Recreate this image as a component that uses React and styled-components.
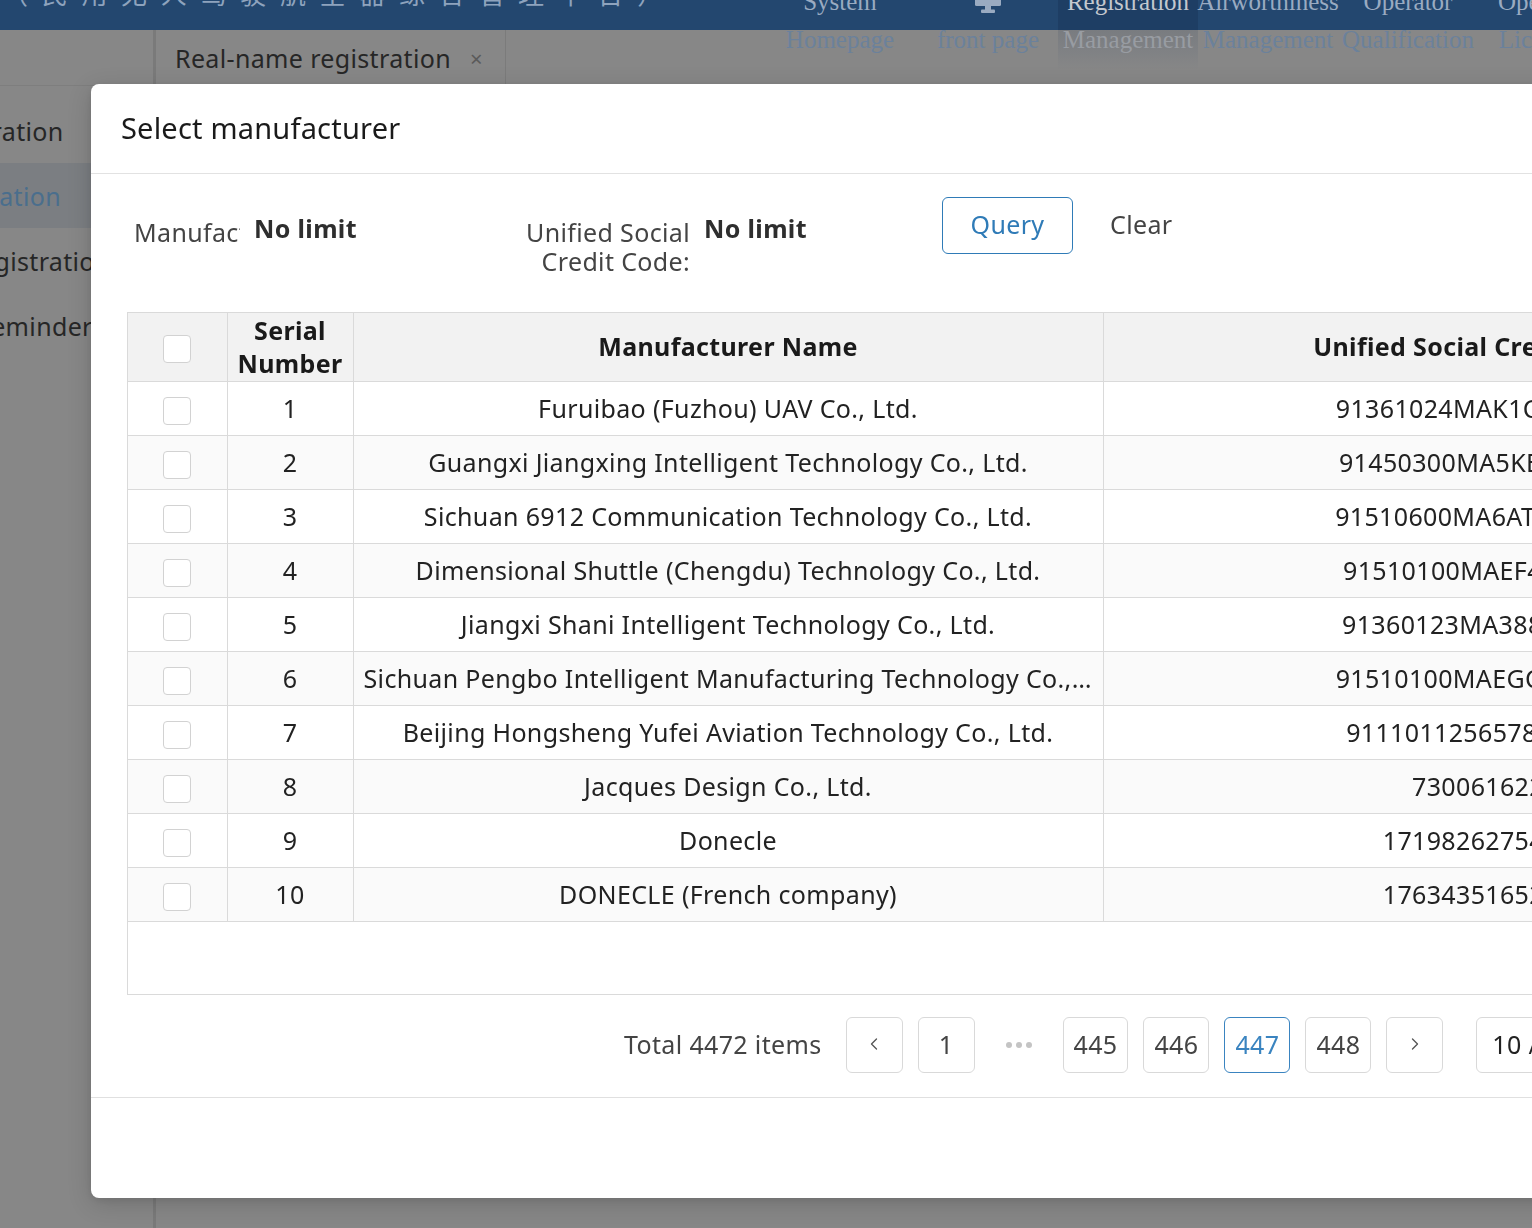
import React from 'react';
import styled, { createGlobalStyle } from 'styled-components';
import { ChevronLeft, ChevronRight } from 'lucide-react';

const GlobalStyle = createGlobalStyle`
  html, body { margin: 0; padding: 0; width: 100%; height: 100%; overflow: hidden; background: #878787; }
  body { font-family: "Noto Sans", "Open Sans", sans-serif; }
  * { box-sizing: border-box; }
`;

const Page = styled.div`
  width: 1532px;
  height: 1228px;
  overflow: hidden;
  background: #878787;
  display: flex;
  flex-direction: column;
`;

const Header = styled.header`
  flex: none;
  height: 60px;
  margin-top: -30px;
  background: #23476f;
  display: grid;
  grid-template-columns: 762px auto;
  align-items: start;
  position: relative;
  z-index: 1;
`;

const SiteTitle = styled.div`
  font-family: "Noto Sans CJK SC", "Noto Sans", sans-serif;
  font-size: 26px;
  letter-spacing: 13.7px;
  line-height: 32px;
  margin-top: 7px;
  padding-left: 2px;
  color: #8ea3bd;
  white-space: nowrap;
  overflow: hidden;
`;

const Nav = styled.nav`
  display: flex;
  align-items: flex-start;
`;

const NavItem = styled.div`
  flex: none;
  width: ${(p) => p.$w || 140}px;
  height: 100px;
  padding-top: 13px;
  text-align: center;
  font-family: "Liberation Serif", "Times New Roman", serif;
  font-size: 25px;
  line-height: 38px;
  white-space: nowrap;
  background: ${(p) =>
    p.$active
      ? 'linear-gradient(to bottom, #1e3e64 0, #1e3e64 60px, #797c80 60px, #7f8184 80px, rgba(135,135,135,0) 100px)'
      : 'none'};
`;

const NavTop = styled.div`
  height: 38px;
  color: ${(p) => (p.$active ? '#c3c8cf' : '#9aabc1')};
  display: flex;
  justify-content: center;
  align-items: center;
`;

const NavBottom = styled.div`
  color: ${(p) => (p.$active ? '#989ca2' : '#6b819b')};
`;

const Main = styled.div`
  flex: 1;
  display: flex;
  min-height: 0;
  font-size: 25px;
  letter-spacing: 0.35px;
`;

const Sidebar = styled.aside`
  flex: none;
  width: 156px;
  border-right: 3px solid #7a7a7a;
  overflow: hidden;
`;

const SideTop = styled.div`
  height: 56px;
  border-bottom: 1px solid #7e7e7e;
`;

const SideList = styled.div`
  padding-top: 12px;
`;

const SideItem = styled.div`
  height: 65px;
  display: flex;
  align-items: center;
  white-space: nowrap;
  color: ${(p) => (p.$active ? '#4a6e8d' : '#262626')};
  background: ${(p) => (p.$active ? '#7b7e82' : 'transparent')};
`;

const SideLabel = styled.span`
  margin-left: ${(p) => p.$shift}px;
`;

const Content = styled.div`
  flex: 1;
  min-width: 0;
`;

const TabBar = styled.div`
  height: 56px;
  display: flex;
`;

const Tab = styled.div`
  display: flex;
  align-items: center;
  gap: 19px;
  padding: 0 22px 0 19px;
  border-right: 1px solid #7b7b7b;
  color: #262626;
  white-space: nowrap;
`;

const TabClose = styled.span`
  font-size: 22px;
  color: #5a5a5a;
`;

const Modal = styled.div`
  position: fixed;
  left: 91px;
  top: 84px;
  width: 1900px;
  height: 1114px;
  background: #fff;
  border-radius: 8px;
  box-shadow: 0 6px 24px rgba(0, 0, 0, 0.16), 0 2px 8px rgba(0, 0, 0, 0.08);
  display: flex;
  flex-direction: column;
  z-index: 10;
  overflow: hidden;
  font-size: 25px;
  letter-spacing: 0.35px;
`;

const ModalHeader = styled.div`
  flex: none;
  height: 90px;
  padding: 0 0 3px 30px;
  display: flex;
  align-items: center;
  border-bottom: 1px solid #e2e2e2;
  font-size: 29px;
  letter-spacing: 0.2px;
  color: #1a1a1a;
`;

const ModalBody = styled.div`
  flex: none;
  height: 923px;
  padding: 23px 36px 0;
`;

const FilterRow = styled.div`
  height: 115px;
  padding-left: 7px;
  display: flex;
  align-items: flex-start;
`;

const FormItem = styled.div`
  display: flex;
  align-items: flex-start;
`;

const FormLabel = styled.div`
  width: ${(p) => p.$w}px;
  margin-top: 21px;
  line-height: 29px;
  color: #444;
  text-align: right;
  white-space: ${(p) => (p.$nowrap ? 'nowrap' : 'normal')};
  overflow: hidden;
`;

const FormValue = styled.div`
  width: ${(p) => p.$w}px;
  margin-left: 14px;
  margin-top: 15px;
  line-height: 32px;
  font-weight: 700;
  color: #2e2e2e;
`;

const QueryButton = styled.button`
  width: 131px;
  height: 57px;
  border: 1px solid #2f7bb7;
  border-radius: 6px;
  background: #fff;
  color: #2f7bb7;
  font-family: inherit;
  font-size: inherit;
  letter-spacing: inherit;
  padding: 0 0 3px;
`;

const TextButton = styled.button`
  height: 57px;
  margin-left: 37px;
  border: none;
  background: none;
  padding: 0 0 4px;
  color: #444;
  font-family: inherit;
  font-size: inherit;
  letter-spacing: inherit;
`;

const TableWrap = styled.div`
  width: 1727px;
  height: 683px;
  border: 1px solid #dadada;
  overflow: hidden;
`;

const Table = styled.table`
  border-collapse: collapse;
  table-layout: fixed;
  width: 1725px;
`;

const Th = styled.th`
  height: 68px;
  padding: 0 10px;
  background: #f2f2f2;
  border-right: 1px solid #dadada;
  border-bottom: 1px solid #dadada;
  font-weight: 700;
  line-height: 33px;
  color: #1a1a1a;
  text-align: center;
`;

const Tr = styled.tr`
  background: ${(p) => (p.$striped ? '#fafafa' : '#fff')};
`;

const Td = styled.td`
  height: 54px;
  padding: 0 10px;
  border-right: 1px solid #dadada;
  border-bottom: 1px solid #dadada;
  color: #222;
  text-align: center;
  white-space: nowrap;
  overflow: hidden;
  text-overflow: ellipsis;
`;

const Check = styled.span`
  display: inline-block;
  width: 28px;
  height: 28px;
  border: 1px solid #d2d2d2;
  border-radius: 4px;
  background: #fff;
  vertical-align: middle;
`;

const Pager = styled.div`
  margin-top: 22px;
  height: 56px;
  padding-left: 497px;
  display: flex;
  align-items: center;
  gap: 15px;
  white-space: nowrap;
`;

const Total = styled.span`
  color: #444;
  margin-right: 9px;
  padding-bottom: 3px;
`;

const PageBtn = styled.div`
  flex: none;
  min-width: 57px;
  height: 56px;
  padding: 0 10px 2px;
  border: 1px solid ${(p) => (p.$active ? '#3a84c0' : '#d9d9d9')};
  border-radius: 6px;
  display: flex;
  align-items: center;
  justify-content: center;
  color: ${(p) => (p.$active ? '#3a84c0' : '#444')};
  background: #fff;
`;

const Ellipsis = styled.div`
  flex: none;
  width: 58px;
  display: flex;
  justify-content: center;
  gap: 4px;
`;

const Dot = styled.span`
  width: 6px;
  height: 6px;
  border-radius: 50%;
  background: #c4c4c4;
`;

const SizeSelect = styled.div`
  flex: none;
  width: 170px;
  height: 56px;
  margin-left: 18px;
  padding: 0 0 2px 15px;
  border: 1px solid #d9d9d9;
  border-radius: 6px;
  display: flex;
  align-items: center;
  color: #222;
`;

const ModalFooter = styled.div`
  flex: 1;
  border-top: 1px solid #e0e0e0;
`;

const Monitor = () => (
  <svg width="28" height="24" viewBox="0 0 28 24" fill="#9aabc1">
    <rect x="1" y="0" width="26" height="16" rx="1.5" />
    <rect x="11" y="16" width="6" height="4" />
    <rect x="7" y="19.5" width="14" height="3.5" rx="1" />
  </svg>
);

const navItems = [
  { top: 'System', bottom: 'Homepage', w: 156 },
  { icon: true, bottom: 'front page' },
  { top: 'Registration', bottom: 'Management', active: true },
  { top: 'Airworthiness', bottom: 'Management' },
  { top: 'Operator', bottom: 'Qualification' },
  { top: 'Operation', bottom: 'Licensing' },
];

const sideItems = [
  { label: 'Registration', shift: -83 },
  { label: 'Real-name registration', shift: -215, active: true },
  { label: 'Cancel registration', shift: -117 },
  { label: 'Expiry reminder', shift: -100 },
];

const rows = [
  ['Furuibao (Fuzhou) UAV Co., Ltd.', '91361024MAK1C8QD3L'],
  ['Guangxi Jiangxing Intelligent Technology Co., Ltd.', '91450300MA5KE6BR2X'],
  ['Sichuan 6912 Communication Technology Co., Ltd.', '91510600MA6AT9WL4N'],
  ['Dimensional Shuttle (Chengdu) Technology Co., Ltd.', '91510100MAEF4KJ57H'],
  ['Jiangxi Shani Intelligent Technology Co., Ltd.', '91360123MA388Y2F0T'],
  ['Sichuan Pengbo Intelligent Manufacturing Technology Co., Ltd.', '91510100MAEGC3PU8K'],
  ['Beijing Hongsheng Yufei Aviation Technology Co., Ltd.', '911101125657834126'],
  ['Jacques Design Co., Ltd.', '730061622'],
  ['Donecle', '1719826275489'],
  ['DONECLE (French company)', '1763435165207'],
];

export default function App() {
  return (
    <>
      <GlobalStyle />
      <Page>
        <Header>
          <SiteTitle>（民用无人驾驶航空器综合管理平台）</SiteTitle>
          <Nav>
            {navItems.map((n, i) => (
              <NavItem key={i} $w={n.w} $active={n.active}>
                <NavTop $active={n.active}>{n.icon ? <Monitor /> : n.top}</NavTop>
                <NavBottom $active={n.active}>{n.bottom}</NavBottom>
              </NavItem>
            ))}
          </Nav>
        </Header>
        <Main>
          <Sidebar>
            <SideTop />
            <SideList>
              {sideItems.map((s) => (
                <SideItem key={s.label} $active={s.active}>
                  <SideLabel $shift={s.shift}>{s.label}</SideLabel>
                </SideItem>
              ))}
            </SideList>
          </Sidebar>
          <Content>
            <TabBar>
              <Tab>
                Real-name registration
                <TabClose>×</TabClose>
              </Tab>
            </TabBar>
          </Content>
        </Main>
      </Page>

      <Modal>
        <ModalHeader>Select manufacturer</ModalHeader>
        <ModalBody>
          <FilterRow>
            <FormItem>
              <FormLabel $w={106} $nowrap>Manufacturer:</FormLabel>
              <FormValue $w={266}>No limit</FormValue>
            </FormItem>
            <FormItem>
              <FormLabel $w={170}>Unified Social Credit Code:</FormLabel>
              <FormValue $w={238}>No limit</FormValue>
            </FormItem>
            <QueryButton>Query</QueryButton>
            <TextButton>Clear</TextButton>
          </FilterRow>
          <TableWrap>
            <Table>
              <colgroup>
                <col style={{ width: 99 }} />
                <col style={{ width: 126 }} />
                <col style={{ width: 750 }} />
                <col style={{ width: 750 }} />
              </colgroup>
              <thead>
                <tr>
                  <Th><Check /></Th>
                  <Th>Serial Number</Th>
                  <Th>Manufacturer Name</Th>
                  <Th>Unified Social Credit Code</Th>
                </tr>
              </thead>
              <tbody>
                {rows.map((r, i) => (
                  <Tr key={i} $striped={i % 2 === 1}>
                    <Td><Check /></Td>
                    <Td>{i + 1}</Td>
                    <Td>{r[0]}</Td>
                    <Td>{r[1]}</Td>
                  </Tr>
                ))}
              </tbody>
            </Table>
          </TableWrap>
          <Pager>
            <Total>Total 4472 items</Total>
            <PageBtn><ChevronLeft size={20} strokeWidth={1.6} color="#555" /></PageBtn>
            <PageBtn>1</PageBtn>
            <Ellipsis><Dot /><Dot /><Dot /></Ellipsis>
            <PageBtn>445</PageBtn>
            <PageBtn>446</PageBtn>
            <PageBtn $active>447</PageBtn>
            <PageBtn>448</PageBtn>
            <PageBtn><ChevronRight size={20} strokeWidth={1.6} color="#555" /></PageBtn>
            <SizeSelect>10 / page</SizeSelect>
          </Pager>
        </ModalBody>
        <ModalFooter />
      </Modal>
    </>
  );
}
